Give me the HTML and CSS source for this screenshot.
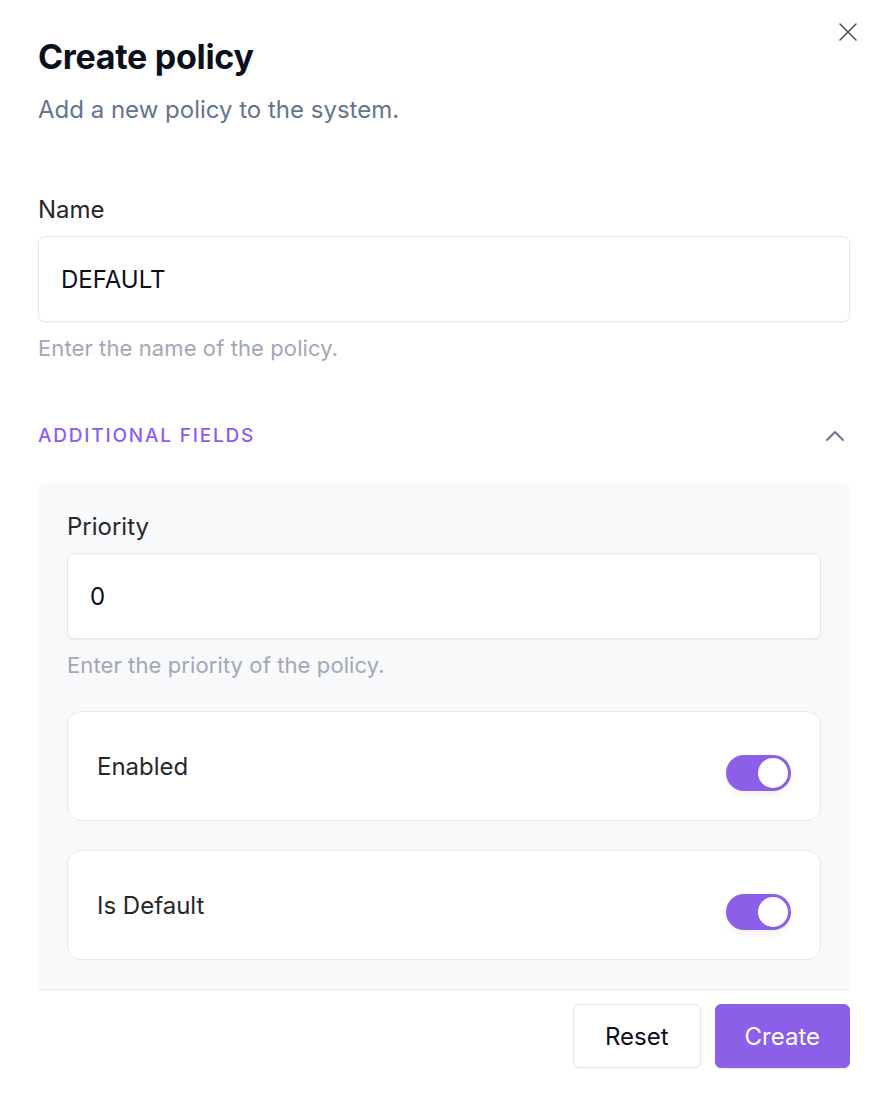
FILE: index.html
```html
<!DOCTYPE html>
<html lang="en">
<head>
    <meta charset="UTF-8">
    <meta name="viewport" content="width=device-width, initial-scale=1.0">
    <title>Create policy</title>
    <link rel="stylesheet" href="styles.css">
</head>
<body>
    <div class="dialog">
        <button class="close" aria-label="Close">
            <svg width="20" height="20" viewBox="0 0 20 20" fill="none" stroke="currentColor" stroke-width="1.6" stroke-linecap="round">
                <path d="M2 2 L18 18 M18 2 L2 18"/>
            </svg>
        </button>

        <h1 class="title">Create policy</h1>
        <p class="subtitle">Add a new policy to the system.</p>

        <div class="field">
            <label class="label" for="name">Name</label>
            <input class="input" id="name" type="text" value="DEFAULT">
            <p class="help">Enter the name of the policy.</p>
        </div>

        <div class="section-head">
            <span class="section-title">ADDITIONAL FIELDS</span>
            <svg class="chevron" width="20" height="12" viewBox="0 0 20 12" fill="none" stroke="currentColor" stroke-width="2" stroke-linecap="round" stroke-linejoin="round">
                <path d="M2 10 L10 2 L18 10"/>
            </svg>
        </div>

        <div class="panel">
            <div class="field">
                <label class="label" for="priority">Priority</label>
                <input class="input" id="priority" type="text" value="0">
                <p class="help">Enter the priority of the policy.</p>
            </div>

            <div class="switch-card">
                <span class="switch-label">Enabled</span>
                <span class="switch on"><span class="knob"></span></span>
            </div>

            <div class="switch-card">
                <span class="switch-label">Is Default</span>
                <span class="switch on"><span class="knob"></span></span>
            </div>
        </div>

        <div class="footer">
            <button class="btn btn-outline">Reset</button>
            <button class="btn btn-primary">Create</button>
        </div>
    </div>
</body>
</html>
```

FILE: styles.css
```css
* {
    box-sizing: border-box;
}
body {
    margin: 0;
    background-color: white;
    font-family: Inter, "Noto Sans", sans-serif;
    color: #27272a;
}
.dialog {
    position: relative;
    padding: 37px 38px 36px 38px;
    width: 888px;
}
.close {
    position: absolute;
    top: 22px;
    right: 30px;
    padding: 0;
    border: none;
    background: none;
    color: #4b5563;
}
.title {
    margin: 0;
    font-size: 34px;
    line-height: 40px;
    font-weight: 700;
    letter-spacing: -0.3px;
    color: #0b0f1c;
}
.subtitle {
    margin: 18px 0 0 0;
    font-size: 24px;
    line-height: 30px;
    color: #64748b;
}
.field {
    display: flex;
    flex-direction: column;
}
.dialog > .field {
    margin-top: 70px;
}
.label {
    font-size: 24px;
    line-height: 30px;
    color: #27272a;
}
.input {
    margin-top: 11px;
    height: 86px;
    padding: 0 22px;
    border: 1px solid #e5e7eb;
    border-radius: 7px;
    background: white;
    font-family: inherit;
    font-size: 24px;
    color: #0b0f1c;
    box-shadow: 0 1px 2px rgba(15, 23, 42, 0.05);
    outline: none;
}
.help {
    margin: 12px 0 0 0;
    font-size: 22px;
    line-height: 28px;
    letter-spacing: 0.1px;
    color: #a1a8b5;
}
.section-head {
    display: flex;
    justify-content: space-between;
    align-items: center;
    height: 24px;
    margin-top: 62px;
    padding-right: 5px;
}
.section-title {
    font-size: 19px;
    line-height: 24px;
    font-weight: 500;
    letter-spacing: 1.8px;
    color: #8b5cf6;
}
.chevron {
    color: #64748b;
}
.panel {
    display: flex;
    flex-direction: column;
    gap: 29px;
    margin-top: 33px;
    padding: 31px 29px 29px 29px;
    background-color: #f8f9fb;
    border-radius: 8px 8px 0 0;
}
.panel .help {
    margin-bottom: 3px;
}
.switch-card {
    display: flex;
    justify-content: space-between;
    align-items: center;
    height: 110px;
    padding: 0 29px 0 29px;
    background: white;
    border: 1px solid #e6e9ee;
    border-radius: 14px;
}
.switch-label {
    font-size: 24px;
    color: #27272a;
}
.switch {
    display: flex;
    align-items: center;
    justify-content: flex-end;
    width: 65px;
    height: 36px;
    margin-top: 14px;
    padding: 3px;
    border-radius: 18px;
    background-color: #8b5fe8;
    box-shadow: 0 4px 8px rgba(15, 23, 42, 0.06);
}
.knob {
    width: 30px;
    height: 30px;
    border-radius: 50%;
    background: white;
}
.footer {
    display: flex;
    justify-content: flex-end;
    gap: 14px;
    padding-top: 14px;
    border-top: 1px solid #e5e7eb;
}
.btn {
    height: 64px;
    border-radius: 6px;
    font-family: inherit;
    font-size: 24px;
    cursor: pointer;
}
.btn-outline {
    padding: 0 31px;
    background: white;
    border: 1px solid #e2e8f0;
    color: #0b0f1c;
    box-shadow: 0 1px 2px rgba(15, 23, 42, 0.05);
}
.btn-primary {
    padding: 0 29px;
    background-color: #8b5fe8;
    border: 1px solid #8b5fe8;
    color: white;
    box-shadow: 0 1px 2px rgba(15, 23, 42, 0.1);
}
```
